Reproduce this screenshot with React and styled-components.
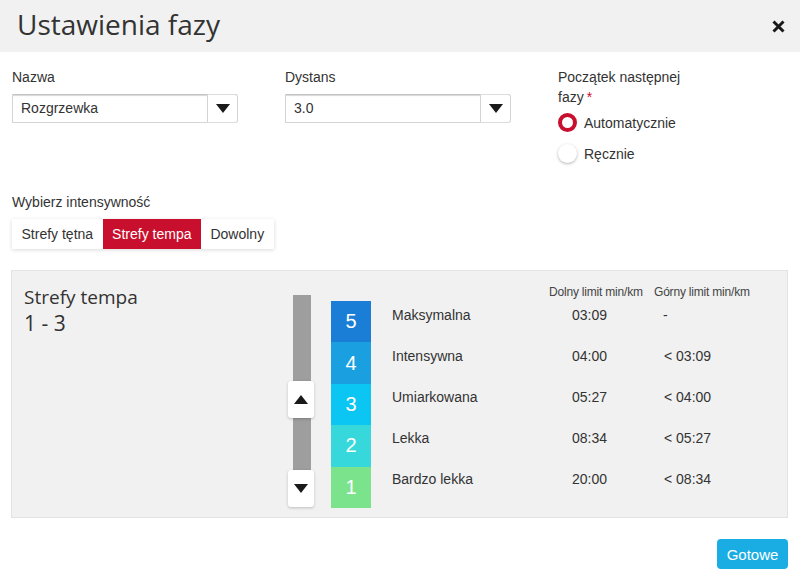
import styled, { createGlobalStyle } from "styled-components";

const GlobalStyle = createGlobalStyle`
  body {
    margin: 0;
    background: #fff;
    font-family: "Liberation Sans", Arial, sans-serif;
    color: #333;
  }
`;

const zones = [
  { n: 5, name: "Maksymalna", low: "03:09", high: "-", color: "#1a7dd6" },
  { n: 4, name: "Intensywna", low: "04:00", high: "< 03:09", color: "#1a9fe0" },
  { n: 3, name: "Umiarkowana", low: "05:27", high: "< 04:00", color: "#0bc6f2" },
  { n: 2, name: "Lekka", low: "08:34", high: "< 05:27", color: "#37d8dc" },
  { n: 1, name: "Bardzo lekka", low: "20:00", high: "< 08:34", color: "#7ae38c" },
];

const Triangle = ({ up }) => (
  <svg width="14" height="9" viewBox="0 0 14 9">
    <path d={up ? "M0 9 L7 0 L14 9 Z" : "M0 0 L14 0 L7 9 Z"} fill="#1a1a1a" />
  </svg>
);

const Select = ({ value }) => (
  <SelectBox>
    <SelectValue>{value}</SelectValue>
    <SelectButton>
      <Triangle />
    </SelectButton>
  </SelectBox>
);

const App = () => {
  return (
    <>
      <GlobalStyle />
      <Header>
        <Title>Ustawienia fazy</Title>
        <Close>
          <svg width="13" height="13" viewBox="0 0 13 13">
            <path d="M1.5 1.5 L11.5 11.5 M11.5 1.5 L1.5 11.5" stroke="#1a1a1a" strokeWidth="3" />
          </svg>
        </Close>
      </Header>
      <Body>
        <FormRow>
          <Field>
            <Label>Nazwa</Label>
            <Select value="Rozgrzewka" />
          </Field>
          <Field>
            <Label>Dystans</Label>
            <Select value="3.0" />
          </Field>
          <Field>
            <Label narrow>
              Początek następnej
              <br />
              fazy<Required>*</Required>
            </Label>
            <RadioRow>
              <Radio checked />
              Automatycznie
            </RadioRow>
            <RadioRow>
              <Radio />
              Ręcznie
            </RadioRow>
          </Field>
        </FormRow>

        <Label>Wybierz intensywność</Label>
        <Tabs>
          <Tab>Strefy tętna</Tab>
          <Tab active>Strefy tempa</Tab>
          <Tab>Dowolny</Tab>
        </Tabs>

        <Panel>
          <PanelTitle>
            <Heading>Strefy tempa</Heading>
            <Range>1 - 3</Range>
          </PanelTitle>
          <Slider>
            <Track />
            <Handle top={86}>
              <Triangle up />
            </Handle>
            <Handle top={175}>
              <Triangle />
            </Handle>
          </Slider>
          <ZoneBar>
            {zones.map((z) => (
              <Zone key={z.n} color={z.color}>
                {z.n}
              </Zone>
            ))}
          </ZoneBar>
          <Table>
            <span />
            <ColHead>Dolny limit min/km</ColHead>
            <ColHead>Górny limit min/km</ColHead>
            {zones.map((z) => (
              <Row key={z.n}>
                <Cell>{z.name}</Cell>
                <Cell pad={23}>{z.low}</Cell>
                <Cell pad={z.high === "-" ? 9 : 10}>{z.high}</Cell>
              </Row>
            ))}
          </Table>
        </Panel>

        <Footer>
          <Button>Gotowe</Button>
        </Footer>
      </Body>
    </>
  );
};

const Header = styled.div`
  height: 52px;
  background: #f1f1f1;
  display: flex;
  align-items: center;
  justify-content: space-between;
  padding: 0 15px 4px 17px;
  box-sizing: border-box;
`;

const Title = styled.h1`
  margin: 0;
  font-family: "Open Sans", sans-serif;
  font-weight: 400;
  font-size: 28px;
  color: #333;
`;

const Close = styled.div`
  display: flex;
  margin-top: 4px;
`;

const Body = styled.div`
  padding: 15px 12px 0;
`;

const FormRow = styled.div`
  display: grid;
  grid-template-columns: 226px 226px 1fr;
  column-gap: 47px;
  margin-bottom: 23px;
`;

const Field = styled.div`
  display: flex;
  flex-direction: column;
`;

const Label = styled.div`
  font-size: 14px;
  line-height: 20px;
  margin-bottom: ${(p) => (p.narrow ? "0" : "7px")};
`;

const Required = styled.span`
  color: #c8102e;
  margin-left: 3px;
`;

const SelectBox = styled.div`
  display: flex;
  height: 29px;
  box-sizing: border-box;
  border: 1px solid #d4d4d4;
  border-top-color: #c4c4c4;
  border-radius: 0 3px 3px 0;
  box-shadow: inset 0 2px 1px -1px #d8d8d8;
`;

const SelectValue = styled.div`
  flex: 1;
  font-size: 14px;
  line-height: 27px;
  padding-left: 8px;
`;

const SelectButton = styled.div`
  width: 29px;
  border-left: 1px solid #d4d4d4;
  background: #fff;
  border-radius: 0 3px 3px 0;
  display: flex;
  align-items: center;
  justify-content: center;
  margin-top: -1px;
  margin-bottom: -1px;
  border-top: 1px solid #ddd;
  border-bottom: 1px solid #ddd;
`;

const RadioRow = styled.div`
  display: flex;
  align-items: center;
  gap: 7px;
  height: 31px;
  font-size: 14px;
`;

const Radio = styled.span`
  width: 19px;
  height: 19px;
  box-sizing: border-box;
  border-radius: 50%;
  background: #fff;
  border: ${(p) => (p.checked ? "4px solid #c8102e" : "none")};
  box-shadow: ${(p) => (p.checked ? "none" : "0 1px 3px rgba(0,0,0,0.3)")};
`;

const Tabs = styled.div`
  display: inline-flex;
  box-shadow: 0 1px 4px rgba(0, 0, 0, 0.15);
`;

const Tab = styled.div`
  font-size: 14px;
  line-height: 30px;
  padding: 0 9.5px;
  background: ${(p) => (p.active ? "#c8102e" : "#fff")};
  color: ${(p) => (p.active ? "#fff" : "#333")};
`;

const Panel = styled.div`
  margin: 21px 0 0 -1px;
  display: flex;
  align-items: flex-start;
  background: #f1f1f1;
  border: 1px solid #e3e3e3;
  padding: 14px 12px 11px;
  height: 248px;
  box-sizing: border-box;
`;

const PanelTitle = styled.div`
  width: 264px;
  font-family: "Open Sans", sans-serif;
  color: #333;
`;

const Heading = styled.div`
  font-size: 19px;
  line-height: 24px;
`;

const Range = styled.div`
  font-size: 21px;
  line-height: 28px;
`;

const Slider = styled.div`
  position: relative;
  width: 26px;
  height: 212px;
  margin-top: 10px;
`;

const Track = styled.div`
  position: absolute;
  left: 5px;
  top: 0;
  width: 18px;
  height: 200px;
  background: #9e9e9e;
`;

const Handle = styled.div`
  position: absolute;
  left: 0;
  top: ${(p) => p.top}px;
  width: 26px;
  height: 37px;
  background: #fff;
  border-radius: 3px;
  box-shadow: 0 1px 3px rgba(0, 0, 0, 0.22);
  display: flex;
  align-items: center;
  justify-content: center;
`;

const ZoneBar = styled.div`
  margin: 16px 0 0 17px;
  width: 40px;
  display: flex;
  flex-direction: column;
`;

const Zone = styled.div`
  height: 41.4px;
  background: ${(p) => p.color};
  color: #fff;
  font-size: 20px;
  display: flex;
  align-items: center;
  justify-content: center;
`;

const Table = styled.div`
  margin-left: 21px;
  display: grid;
  grid-template-columns: 147px 95px 98px;
  column-gap: 10px;
`;

const ColHead = styled.div`
  font-size: 12px;
  line-height: 14px;
  color: #444;
  white-space: nowrap;
  letter-spacing: -0.2px;
`;

const Row = styled.div`
  display: contents;
`;

const Cell = styled.div`
  height: 41px;
  padding-top: 8px;
  padding-left: ${(p) => p.pad || 0}px;
  box-sizing: border-box;
  font-size: 14px;
  line-height: 17px;
  color: #333;
`;

const Footer = styled.div`
  display: flex;
  justify-content: flex-end;
  margin-top: 21px;
`;

const Button = styled.button`
  width: 71px;
  height: 30px;
  border: none;
  border-radius: 4px;
  background: #1aade4;
  color: #fff;
  font-family: "Liberation Sans", Arial, sans-serif;
  font-size: 15px;
  padding: 0;
`;

export default App;
